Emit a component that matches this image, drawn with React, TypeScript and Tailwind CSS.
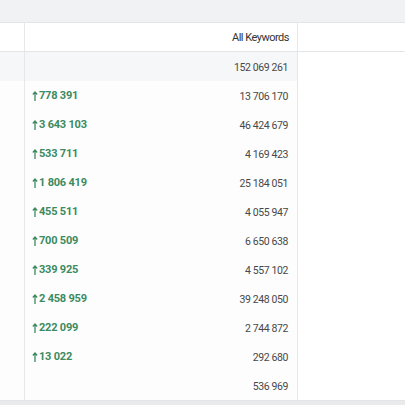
const rows: [string, string][] = [
  ['778 391', '13 706 170'],
  ['3 643 103', '46 424 679'],
  ['533 711', '4 169 423'],
  ['1 806 419', '25 184 051'],
  ['455 511', '4 055 947'],
  ['700 509', '6 650 638'],
  ['339 925', '4 557 102'],
  ['2 458 959', '39 248 050'],
  ['222 099', '2 744 872'],
  ['13 022', '292 680'],
];

function UpArrow() {
  return (
    <svg width="6" height="10" viewBox="0 0 6 10" className="mr-[1px] mb-[1px] shrink-0">
      <path d="M3 1.2V10" stroke="#3b8a60" strokeWidth="1.3" />
      <path d="M0.8 3.5L3 1L5.2 3.5" stroke="#3b8a60" strokeWidth="1.2" fill="none" />
    </svg>
  );
}

function Row({
  gain,
  total,
  shaded,
}: {
  gain?: string;
  total: string;
  shaded?: boolean;
}) {
  return (
    <div className={`flex h-[29px] ${shaded ? 'bg-[#f6f7f8]' : 'bg-[#fdfdfd]'}`}>
      <div className="w-[25px] shrink-0 border-r border-[#e6e7e9]" />
      <div className="flex w-[273px] shrink-0 items-center justify-between border-r border-[#e6e7e9] pt-[2px] pl-[7px] pr-[9px]">
        <span className="flex items-center text-[11px] font-bold tracking-[-0.2px] text-[#3b8a60]">
          {gain && <UpArrow />}
          {gain}
        </span>
        <span className="text-[10.5px] tracking-[-0.4px] text-[#484848]">{total}</span>
      </div>
      <div className="flex-1 bg-white" />
    </div>
  );
}

export default function App() {
  return (
    <div
      className="flex h-[405px] w-[405px] flex-col overflow-hidden bg-white"
      style={{ fontFamily: 'Roboto, "Liberation Sans", sans-serif' }}
    >
      <div className="h-[23px] shrink-0 border-b border-[#e4e5e7] bg-[#f1f2f3]" />
      <div className="flex h-[29px] shrink-0 border-b border-[#e4e5e7] bg-white">
        <div className="w-[25px] shrink-0 border-r border-[#e6e7e9]" />
        <div className="flex w-[273px] shrink-0 items-center justify-end border-r border-[#e6e7e9] pt-[2px] pr-[8px] text-[11px] tracking-[-0.5px] text-[#333]">
          All Keywords
        </div>
        <div className="flex-1" />
      </div>
      <Row total="152 069 261" shaded />
      {rows.map(([g, t]) => (
        <Row key={g} gain={g} total={t} />
      ))}
      <Row total="536 969" />
      <div className="flex-1 border-t border-[#e4e5e7] bg-[#e9eaeb]" />
    </div>
  );
}
